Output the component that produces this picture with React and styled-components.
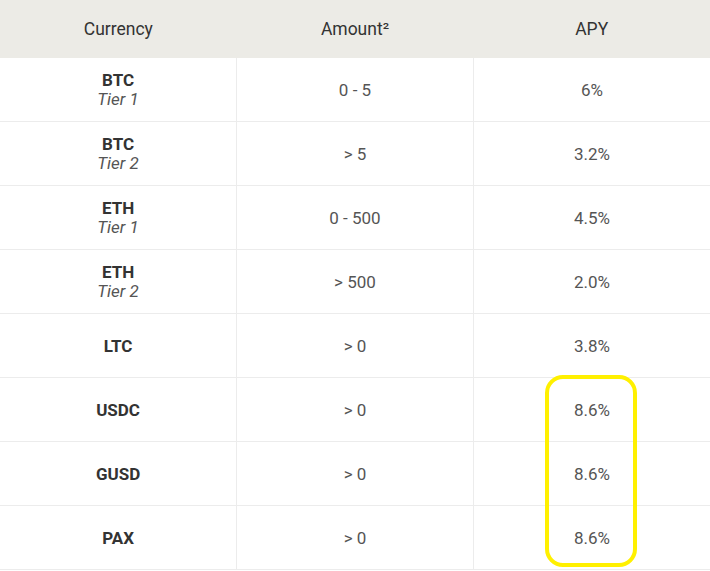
import React from 'react'
import styled, { createGlobalStyle } from 'styled-components'

const GlobalStyle = createGlobalStyle`
  body {
    margin: 0;
    background: #fff;
    font-family: 'Roboto', 'Liberation Sans', sans-serif;
  }
`

const Wrapper = styled.div`
  position: relative;
  width: 710px;
`

const Table = styled.table`
  width: 100%;
  border-collapse: collapse;
  table-layout: fixed;
`

const HeadCell = styled.th`
  height: 58px;
  padding: 0;
  background-color: #ecebe6;
  color: #333;
  font-size: 17.5px;
  font-weight: 400;
  text-align: center;
  vertical-align: middle;
`

const Row = styled.tr`
  border-bottom: 1px solid #ececec;
`

const Cell = styled.td`
  height: 63px;
  padding: 0;
  text-align: center;
  vertical-align: middle;
  color: #555;
  font-size: 17px;
  & + & {
    border-left: 1px solid #ececec;
  }
`

const Coin = styled.div`
  color: #333;
  font-weight: 700;
  font-size: 17px;
  line-height: 20px;
`

const Tier = styled.div`
  color: #555;
  font-style: italic;
  font-size: 17px;
  line-height: 19px;
`

const Highlight = styled.div`
  position: absolute;
  left: 545px;
  top: 375px;
  width: 92px;
  height: 192px;
  box-sizing: border-box;
  border: 4px solid #fff000;
  border-radius: 18px;
  pointer-events: none;
`

const rates = [
  { coin: 'BTC', tier: 'Tier 1', amount: '0 - 5', apy: '6%' },
  { coin: 'BTC', tier: 'Tier 2', amount: '> 5', apy: '3.2%' },
  { coin: 'ETH', tier: 'Tier 1', amount: '0 - 500', apy: '4.5%' },
  { coin: 'ETH', tier: 'Tier 2', amount: '> 500', apy: '2.0%' },
  { coin: 'LTC', amount: '> 0', apy: '3.8%' },
  { coin: 'USDC', amount: '> 0', apy: '8.6%' },
  { coin: 'GUSD', amount: '> 0', apy: '8.6%' },
  { coin: 'PAX', amount: '> 0', apy: '8.6%' },
]

const App = () => (
  <Wrapper>
    <GlobalStyle />
    <Table>
      <thead>
        <tr>
          <HeadCell>Currency</HeadCell>
          <HeadCell>Amount²</HeadCell>
          <HeadCell>APY</HeadCell>
        </tr>
      </thead>
      <tbody>
        {rates.map((r, i) => (
          <Row key={i}>
            <Cell>
              <Coin>{r.coin}</Coin>
              {r.tier && <Tier>{r.tier}</Tier>}
            </Cell>
            <Cell>{r.amount}</Cell>
            <Cell>{r.apy}</Cell>
          </Row>
        ))}
      </tbody>
    </Table>
    <Highlight />
  </Wrapper>
)

export default App
